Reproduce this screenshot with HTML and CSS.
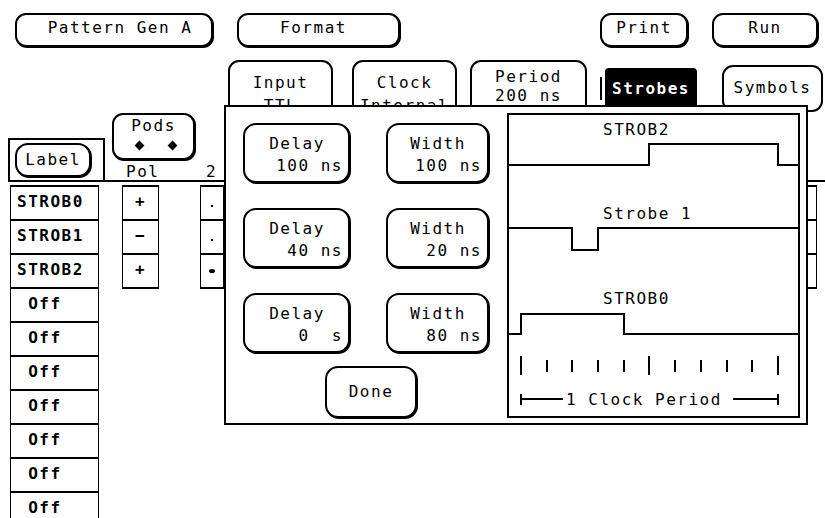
FILE: index.html
```html
<!DOCTYPE html>
<html>
<head>
<meta charset="utf-8">
<title>Pattern Gen A - Format - Strobes</title>
<link rel="stylesheet" href="styles.css">
</head>
<body>
<div class="screen">
  <div class="topbar">
    <div class="btn topbtn btn-pattern">Pattern Gen A</div>
    <div class="btn topbtn btn-format">Format</div>
    <div class="btn topbtn btn-print">Print</div>
    <div class="btn topbtn btn-run">Run</div>
  </div>

  <div class="tabs">
    <div class="tab tab-tall tab-input"><span>Input</span><span>TTL</span></div>
    <div class="tab tab-tall tab-clock"><span>Clock</span><span>Internal</span></div>
    <div class="tab tab-period"><span>Period</span><span>200 ns</span></div>
    <div class="tab-edge"></div>
    <div class="tab tab-strobes">Strobes</div>
    <div class="tab tab-symbols">Symbols</div>
  </div>

  <div class="thead">
    <div class="lbl-head"><div class="btn btn-label">Label</div></div>
    <div class="pods-col">
      <div class="btn btn-pods">
        <span>Pods</span>
        <span class="diamonds"><i></i><i></i></span>
      </div>
      <div class="pol-label">Pol</div>
    </div>
    <div class="col2-label">2</div>
  </div>

  <div class="rows">
    <div class="col col-label">
      <div class="cell">STROB0</div>
      <div class="cell">STROB1</div>
      <div class="cell">STROB2</div>
      <div class="cell"> Off</div>
      <div class="cell"> Off</div>
      <div class="cell"> Off</div>
      <div class="cell"> Off</div>
      <div class="cell"> Off</div>
      <div class="cell"> Off</div>
      <div class="cell"> Off</div>
    </div>
    <div class="col col-pol">
      <div class="cell">+</div>
      <div class="cell">−</div>
      <div class="cell">+</div>
    </div>
    <div class="col col-2">
      <div class="cell"><span class="dot"></span></div>
      <div class="cell"><span class="dot"></span></div>
      <div class="cell"><span class="dot big"></span></div>
    </div>
    <div class="col col-last">
      <div class="cell"></div>
      <div class="cell"></div>
      <div class="cell"></div>
    </div>
  </div>

  <div class="dialog">
    <div class="controls">
      <div class="pair-grid">
        <div class="btn pbtn"><span class="t">Delay</span><span class="v">100 ns</span></div>
        <div class="btn pbtn"><span class="t">Width</span><span class="v">100 ns</span></div>
        <div class="btn pbtn"><span class="t">Delay</span><span class="v">40 ns</span></div>
        <div class="btn pbtn"><span class="t">Width</span><span class="v">20 ns</span></div>
        <div class="btn pbtn"><span class="t">Delay</span><span class="v">0  s</span></div>
        <div class="btn pbtn"><span class="t">Width</span><span class="v">80 ns</span></div>
      </div>
      <div class="btn done">Done</div>
    </div>
    <div class="wave">
      <svg class="wave-svg" width="289" height="301" viewBox="0 0 289 301">
        <g class="trace">
          <path d="M0 50 H140 V29 H269 V50 H289"/>
          <path d="M0 113 H63 V135 H89 V113 H289"/>
          <path d="M0 219 H12 V199 H115 V219 H289"/>
          <path d="M12 241 V260 M38 245 V257 M63 245 V257 M89 245 V257 M115 245 V257 M140 241 V260 M166 245 V257 M192 245 V257 M218 245 V257 M243 245 V257 M269 241 V260"/>
          <path d="M12 279 V290 M12 284 H54 M224 284 H269 M269 279 V290"/>
        </g>
        <text x="94" y="20">STROB2</text>
        <text x="94" y="104">Strobe 1</text>
        <text x="94" y="189">STROB0</text>
        <text x="57" y="290">1 Clock Period</text>
      </svg>
    </div>
  </div>
</div>
</body>
</html>
```

FILE: styles.css
```css
* { box-sizing: border-box; }

html, body {
  margin: 0;
  padding: 0;
  background: #fff;
}

body {
  font-family: "DejaVu Sans Mono", "Liberation Mono", monospace;
  font-size: 16px;
  letter-spacing: 1.5px;
  color: #000;
}

.screen {
  position: relative;
  width: 825px;
  height: 518px;
  overflow: hidden;
  background: #fff;
}

/* generic rounded HP-style softkey */
.btn {
  border: 2px solid #000;
  border-radius: 11px;
  background: #fff;
  box-shadow: 1px 1px 0 #000;
}

/* ---------- top bar ---------- */
.topbar {
  display: flex;
  height: 47px;
  padding-top: 13px;
}

.topbtn {
  height: 34px;
  line-height: 26px;
  text-align: center;
  white-space: pre;
}

.btn-pattern { margin-left: 15px; width: 198px; padding-left: 12px; }
.btn-format  { margin-left: 24px; width: 163px; padding-right: 10px; }
.btn-print   { margin-left: 200px; width: 88px; }
.btn-run     { margin-left: 24px; width: 106px; }

/* ---------- tabs ---------- */
.tabs {
  display: flex;
  align-items: flex-start;
  height: 66px;
  padding: 13px 0 0 228px;
}

.tab {
  border: 2px solid #000;
  background: #fff;
  text-align: center;
  white-space: pre;
}

.tab-tall {
  display: flex;
  flex-direction: column;
  height: 60px;
  border-radius: 11px 11px 0 0;
  padding-top: 9px;
  line-height: 23px;
}

.tab-input { width: 105px; }
.tab-clock { width: 105px; margin-left: 19px; }

.tab-period {
  display: flex;
  flex-direction: column;
  width: 117px;
  margin-left: 13px;
  height: 60px;
  border-radius: 11px 11px 0 0;
  padding-top: 6px;
  line-height: 18.7px;
}

.tab-edge {
  width: 2px;
  height: 23px;
  margin: 17px 0 0 13px;
  background: #000;
}

.tab-strobes {
  width: 92px;
  height: 50px;
  margin: 8px 0 0 3px;
  background: #000;
  color: #fff;
  font-weight: bold;
  border-radius: 4px 4px 0 0;
  padding-top: 10px;
  line-height: 17px;
}

.tab-symbols {
  width: 101px;
  height: 47px;
  margin: 5px 0 0 25px;
  border-radius: 11px;
  padding-top: 12px;
  line-height: 17px;
}

/* ---------- table header ---------- */
.thead {
  display: flex;
  align-items: flex-end;
  height: 69px;
  margin-left: 8px;
  border-bottom: 2px solid #000;
}

.lbl-head {
  width: 97px;
  height: 42px;
  border: 2px solid #000;
  border-bottom: 0;
  padding: 3px 0 0 5px;
}

.btn-label {
  width: 76px;
  height: 34px;
  line-height: 30px;
  text-align: center;
  border-radius: 13px;
}

.pods-col {
  display: flex;
  flex-direction: column;
  width: 83px;
  height: 67px;
  margin-left: 7px;
}

.btn-pods {
  display: flex;
  flex-direction: column;
  align-items: center;
  height: 47px;
  padding-top: 2px;
  line-height: 17px;
}

.diamonds {
  display: flex;
  gap: 26px;
  margin-top: 8px;
  padding-left: 4px;
}

.diamonds i {
  display: block;
  width: 7px;
  height: 7px;
  background: #000;
  transform: rotate(45deg);
}

.pol-label {
  margin-top: auto;
  line-height: 17px;
  padding-left: 14px;
}

.col2-label {
  margin-left: 11px;
  line-height: 17px;
}

/* ---------- table rows ---------- */
.rows {
  display: flex;
  align-items: flex-start;
  margin-top: 3px;
}

.col {
  display: flex;
  flex-direction: column;
  border-bottom: 2px solid #000;
}

.cell {
  height: 34px;
  border: 1px solid #000;
  border-top-width: 2px;
  border-bottom-width: 0;
  line-height: 30px;
  font-weight: bold;
  white-space: pre;
}

.col-label { margin-left: 10px; width: 89px; }
.col-label .cell { padding-left: 6px; }

.col-pol { margin-left: 23px; width: 37px; }
.col-pol .cell { text-align: center; }

.col-2 { margin-left: 41px; width: 24px; }
.col-2 .cell {
  display: flex;
  align-items: center;
  justify-content: center;
}

.dot {
  display: block;
  width: 2px;
  height: 2px;
  margin-top: 6px;
  background: #000;
}

.dot.big {
  width: 6px;
  height: 4px;
  margin-top: 0;
  border-radius: 50%;
}

.col-last { margin-left: auto; margin-right: 8px; width: 30px; }

/* ---------- strobes dialog (overlay) ---------- */
.dialog {
  position: absolute;
  left: 224px;
  top: 105px;
  z-index: 2;
  display: flex;
  width: 584px;
  height: 320px;
  padding: 6px 6px 5px 17px;
  border: 2px solid #000;
  background: #fff;
}

.controls {
  display: flex;
  flex-direction: column;
  width: 246px;
  margin-right: 18px;
  padding-top: 10px;
}

.pair-grid {
  display: grid;
  grid-template-columns: 107px 103px;
  grid-auto-rows: 60px;
  column-gap: 36px;
  row-gap: 25px;
}

.pbtn {
  display: flex;
  flex-direction: column;
  padding: 8px 5px 0 0;
  line-height: 22px;
  border-radius: 13px;
}

.pbtn .t { text-align: center; padding-left: 6px; }
.pbtn .v { text-align: right; white-space: pre; }

.done {
  width: 92px;
  height: 52px;
  margin: 13px 0 0 82px;
  line-height: 48px;
  text-align: center;
  border-radius: 13px;
}

.wave {
  width: 293px;
  height: 305px;
  border: 2px solid #000;
}

.wave-svg { display: block; }

.wave-svg .trace path {
  fill: none;
  stroke: #000;
  stroke-width: 2;
  shape-rendering: crispEdges;
}

.wave-svg text {
  font-family: "DejaVu Sans Mono", "Liberation Mono", monospace;
  font-size: 16px;
  letter-spacing: 1.5px;
  fill: #000;
}
```
